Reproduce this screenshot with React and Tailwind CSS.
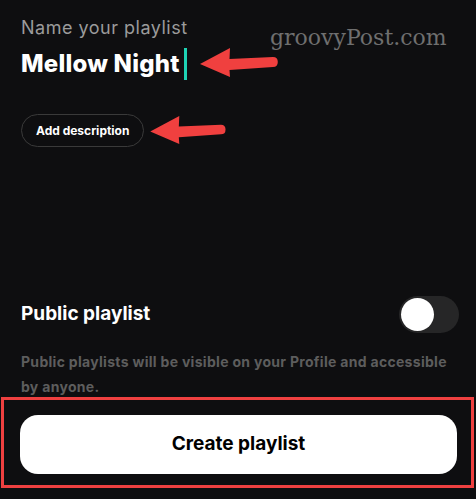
import React, { useState } from "react";

// red annotation arrow, pointing left
const Arrow = ({ className }) => (
  <svg viewBox="0 0 78 31" className={className}>
    <path
      d="M0 17 L30 1 L29.5 12 L73 10 Q77.8 10 77.8 15 Q77.8 20 73 20 L29.5 23 L30 30 Z"
      fill="#f0403f"
    />
  </svg>
);

const App = () => {
  const [isPublic, setIsPublic] = useState(false);

  return (
    <div className="relative w-[476px] h-[499px] bg-[#0e0e10] overflow-hidden font-['Inter',sans-serif]">
      {/* watermark */}
      <div className="absolute left-[270px] top-[27px] text-[22px] leading-[22px] text-[#6f6f6f] font-['DejaVu_Serif',serif]">
        groovyPost.com
      </div>

      <div className="flex flex-col pl-[21px] pr-[17px] pt-[16px]">
        <p className="text-[18px] tracking-[0.5px] text-[#9b9b9b] leading-[24px]">Name your playlist</p>
        <div className="relative flex items-center mt-[8px] h-[32px]">
          <span className="text-[24px] font-extrabold text-white tracking-[0.2px]">Mellow Night</span>
          <span className="ml-[4px] w-[3px] h-[32px] bg-[#1ed2b4]" />
          <Arrow className="absolute left-[179px] top-[-1px] w-[78px] h-[31px]" />
        </div>

        <div className="relative flex items-center mt-[34px]">
          <button className="h-[33px] px-[14px] rounded-full border border-[#3a3a3a] text-[12px] font-bold text-white">
            Add description
          </button>
          <Arrow className="absolute left-[127px] top-[1px] w-[80px] h-[30px]" />
        </div>

        <div className="flex items-center justify-between mt-[149px]">
          <span className="text-[19px] font-bold text-white">Public playlist</span>
          <button
            onClick={() => setIsPublic(!isPublic)}
            className="w-[60px] h-[37px] rounded-full bg-[#262627] flex items-center px-[2px]"
          >
            <span className="w-[33px] h-[33px] rounded-full bg-white" />
          </button>
        </div>

        <p className="mt-[16px] whitespace-nowrap text-[14px] tracking-[0.3px] font-bold text-[#5d5d5d] leading-[25px]">
          Public playlists will be visible on your Profile and accessible
          <br />
          by anyone.
        </p>
      </div>

      <div className="ml-[1px] mr-[2px] -mt-[2px] border-[3px] border-[#ee4040] pl-[16px] pr-[14px] pt-[15px] pb-[11px]">
        <button className="w-full h-[59px] rounded-[18px] bg-white text-[19px] font-bold text-black">
          Create playlist
        </button>
      </div>
    </div>
  );
};

export default App;
